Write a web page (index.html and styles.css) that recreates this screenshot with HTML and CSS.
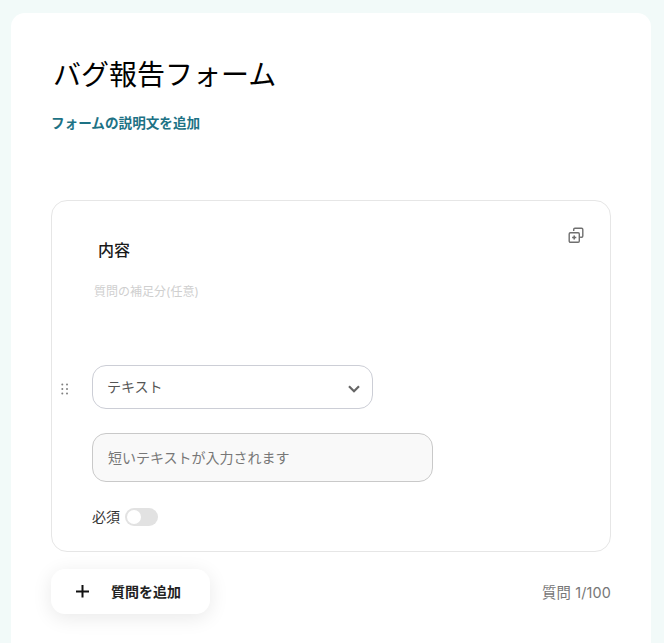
FILE: index.html
```html
<!DOCTYPE html>
<html lang="ja">
<head>
<meta charset="utf-8">
<title>バグ報告フォーム</title>
<link rel="stylesheet" href="styles.css">
</head>
<body>
<main class="panel">
  <h1 class="title">バグ報告フォーム</h1>
  <p class="form-desc">フォームの説明文を追加</p>
  <section class="card">
    <div class="card-head">
      <div class="q-title">内容</div>
      <svg class="copy-icon" width="16" height="16" viewBox="0 0 16 16" fill="none" stroke="#6f6f6f" stroke-width="1.4" aria-hidden="true">
        <path d="M5.7 3.9V2.4a1.2 1.2 0 0 1 1.2-1.2h6.7a1.2 1.2 0 0 1 1.2 1.2v6.7a1.2 1.2 0 0 1-1.2 1.2h-1.5"/>
        <rect x="1.2" y="5.7" width="10.1" height="9.6" rx="1.2"/>
        <path d="M6.2 8.4v4.2M4.1 10.5h4.2" stroke-width="1.6"/>
      </svg>
    </div>
    <div class="q-help">質問の補足分(任意)</div>
    <div class="type-row">
      <svg class="grip" width="8" height="12" viewBox="0 0 8 12" fill="#808080" aria-hidden="true">
        <circle cx="1.3" cy="1.5" r="1"/><circle cx="6" cy="1.5" r="1"/>
        <circle cx="1.3" cy="6" r="1"/><circle cx="6" cy="6" r="1"/>
        <circle cx="1.3" cy="10.500" r="1"/><circle cx="6" cy="10.500" r="1"/>
      </svg>
      <div class="select">
        <span class="select-label">テキスト</span>
        <svg class="chev" width="12" height="8" viewBox="0 0 12 8" fill="none" stroke="#666" stroke-width="2.2" aria-hidden="true"><path d="M1 1.3l5 5 5-5"/></svg>
      </div>
    </div>
    <div class="answer">短いテキストが入力されます</div>
    <div class="required">
      <span class="required-label">必須</span>
      <span class="toggle"><span class="knob"></span></span>
    </div>
  </section>
  <div class="footer-row">
    <button class="add-btn" type="button">
      <svg width="14" height="14" viewBox="0 0 14 14" stroke="#111" stroke-width="2" aria-hidden="true"><path d="M7.500 1v12.500M1 7.500h13"/></svg>
      <span>質問を追加</span>
    </button>
    <div class="count">質問 1/100</div>
  </div>
</main>
</body>
</html>
```
FILE: styles.css
```css
* { box-sizing: border-box; }
html, body { height: 100%; }
body {
  margin: 0;
  background: #f2faf9;
  padding: 13px 13px 0 11px;
  overflow: hidden;
  font-family: Inter, "Noto Sans CJK JP", sans-serif;
}
.panel {
  background: #fff;
  border-radius: 14px 14px 0 0;
  height: 630px;
  padding: 40px 40px 0 40px;
}
.title {
  margin: 1px 0 0 2px;
  font-size: 28px;
  font-weight: 400;
  line-height: 42px;
  color: #000;
}
.form-desc {
  margin: 17px 0 0 0;
  font-size: 13.6px;
  font-weight: 600;
  line-height: 20px;
  color: #1d7285;
}
.card {
  margin-top: 67px;
  height: 352px;
  border: 1px solid #e6e6e6;
  border-radius: 16px;
  padding: 24px 26px 0 40px;
  position: relative;
}
.card-head {
  display: flex;
  justify-content: space-between;
  align-items: flex-start;
}
.q-title {
  margin: 6px 0 0 6px;
  font-size: 16px;
  font-weight: 500;
  line-height: 38px;
  color: #1a1a1a;
}
.copy-icon { margin-top: 2px; }
.q-help {
  margin: 14px 0 0 2px;
  font-size: 12px;
  line-height: 18px;
  color: #cfcfcf;
}
.type-row {
  margin-top: 64px;
  position: relative;
}
.grip { position: absolute; left: -31px; top: 18px; }
.select {
  width: 281px;
  height: 44px;
  border: 1px solid #ccced6;
  border-radius: 14px;
  padding: 0 12px 0 14px;
  display: flex;
  align-items: center;
  justify-content: space-between;
  font-size: 14px;
  color: #555;
}
.select-label { margin-top: -3px; }
.chev { margin-top: 3px; }
.answer {
  margin-top: 24px;
  width: 341px;
  height: 49px;
  background: #f9f9f9;
  border: 1px solid #c9c9c9;
  border-radius: 14px;
  padding: 0 15px 2px;
  display: flex;
  align-items: center;
  font-size: 14px;
  color: #777;
}
.required {
  margin-top: 25px;
  display: flex;
  align-items: center;
  gap: 5px;
  font-size: 14px;
  color: #333;
  height: 20px;
}
.required-label { margin-top: -2px; }
.toggle {
  display: block;
  width: 33px;
  height: 18px;
  border-radius: 9px;
  background: #e2e2e2;
  padding: 2px;
}
.knob {
  display: block;
  width: 14px;
  height: 14px;
  border-radius: 50%;
  background: #fff;
}
.footer-row {
  margin-top: 17px;
  display: flex;
  align-items: center;
  justify-content: space-between;
}
.add-btn {
  width: 159px;
  height: 45px;
  border: 0;
  border-radius: 14px;
  background: #fff;
  box-shadow: 0 4px 20px rgba(0, 0, 0, 0.09);
  display: flex;
  align-items: center;
  gap: 22px;
  padding: 0 0 2px 24px;
  font: 600 14px Inter, "Noto Sans CJK JP", sans-serif;
  color: #222;
}
.count {
  font-size: 14.4px;
  letter-spacing: 0.15px;
  color: #777;
}
```
